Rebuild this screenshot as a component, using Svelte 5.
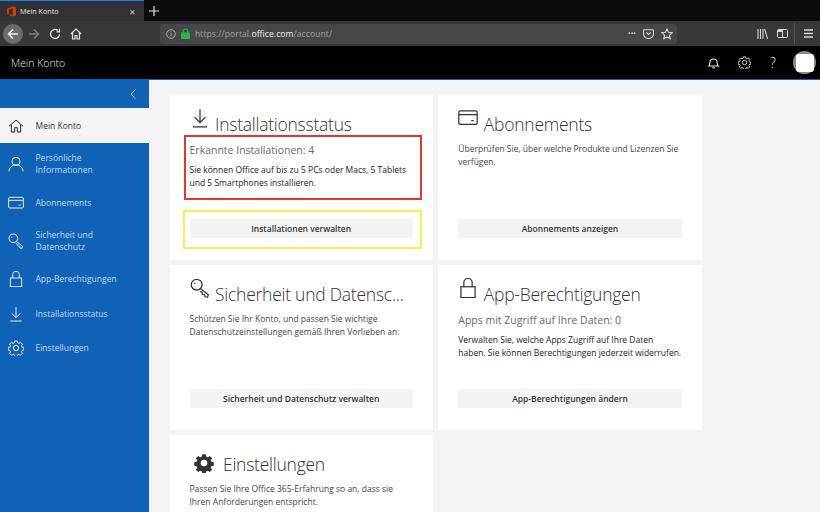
<script>
  const navItems = [
    { icon: 'home', label: 'Mein Konto', active: true },
    { icon: 'person', label: 'Persönliche Informationen', tall: true },
    { icon: 'card', label: 'Abonnements' },
    { icon: 'key', label: 'Sicherheit und Datenschutz', tall: true },
    { icon: 'lock', label: 'App-Berechtigungen' },
    { icon: 'download', label: 'Installationsstatus' },
    { icon: 'gear', label: 'Einstellungen' }
  ];

  const cards = [
    {
      icon: 'download',
      title: 'Installationsstatus',
      sub: 'Erkannte Installationen: 4',
      text: 'Sie können Office auf bis zu 5 PCs oder Macs, 5 Tablets\nund 5 Smartphones installieren.',
      action: 'Installationen verwalten',
      marked: true
    },
    {
      icon: 'card',
      title: 'Abonnements',
      text: 'Überprüfen Sie, über welche Produkte und Lizenzen Sie\nverfügen.',
      action: 'Abonnements anzeigen'
    },
    {
      icon: 'key',
      title: 'Sicherheit und Datensc...',
      text: 'Schützen Sie Ihr Konto, und passen Sie wichtige\nDatenschutzeinstellungen gemäß Ihren Vorlieben an.',
      action: 'Sicherheit und Datenschutz verwalten'
    },
    {
      icon: 'lock',
      title: 'App-Berechtigungen',
      sub: 'Apps mit Zugriff auf Ihre Daten: 0',
      text: 'Verwalten Sie, welche Apps Zugriff auf Ihre Daten\nhaben. Sie können Berechtigungen jederzeit widerrufen.',
      action: 'App-Berechtigungen ändern'
    },
    {
      icon: 'solidgear',
      title: 'Einstellungen',
      text: 'Passen Sie Ihre Office 365-Erfahrung so an, dass sie\nIhren Anforderungen entspricht.'
    }
  ];

  // gear outline, 8 teeth
  const gearPath =
    'M10 1.5h4l.6 2.8 1.9.8 2.4-1.6 2.8 2.8-1.6 2.4.8 1.9 2.8.6v4l-2.8.6-.8 1.9 1.6 2.4-2.8 2.8-2.4-1.6-1.9.8-.6 2.8h-4l-.6-2.8-1.9-.8-2.4 1.6-2.8-2.8 1.6-2.4-.8-1.9-2.8-.6v-4l2.8-.6.8-1.9-1.6-2.4 2.8-2.8 2.4 1.6 1.9-.8z';
</script>

{#snippet icon(name, size)}
  <svg class="icon" width={size} height={size} viewBox="0 0 24 24" fill="none" stroke="currentColor" stroke-width="1.5">
    {#if name === 'home'}
      <path d="M1.5 12.5 12 3l10.5 9.5M5 10v11h5v-6.5h4V21h5V10" />
    {:else if name === 'person'}
      <circle cx="12" cy="8" r="6" />
      <path d="M1.5 23c.5-6 4.5-9.5 10.5-9.5S22 17 22.5 23" />
    {:else if name === 'card'}
      <rect x="1" y="3.5" width="22" height="16" rx="1.5" />
      <path d="M1 8h22M16 15h3" />
    {:else if name === 'key'}
      <circle cx="8" cy="8" r="6.5" />
      <path d="M12.5 12.5 22 20l-1 3-3-.5-.5-2.5-2.5-.5-.5-2.5-2.5-1M5 6.5h1.5" />
    {:else if name === 'lock'}
      <rect x="3.5" y="10.5" width="17" height="13" />
      <path d="M7 10.5V5.500a5 5 0 0 1 10 0v5" />
    {:else if name === 'download'}
      <path d="M12 1.5V17M5.5 11l6.5 6.5 6.5-6.5M3.5 22.500h17" />
    {:else if name === 'gear'}
      <path d={gearPath} />
      <circle cx="12" cy="12" r="4" />
    {:else if name === 'solidgear'}
      <path fill="currentColor" stroke="none" fill-rule="evenodd" d="{gearPath}M12 8a4 4 0 1 0 0 8 4 4 0 0 0 0-8z" />
    {/if}
  </svg>
{/snippet}

<div class="page">
  <div class="tabstrip">
    <div class="tab">
      <svg class="favicon" width="9" height="11" viewBox="0 0 11 12">
        <path fill="#d83b01" d="M0 2.5 7 0l4 1.2v9.6L7 12l-7-2.5 7 .9V2.2L2.3 3.2v5.6L0 9.5z" />
      </svg>
      <span class="tab-title">Mein Konto</span>
      <span class="tab-close">✕</span>
    </div>
    <svg class="newtab" width="10" height="10" viewBox="0 0 10 10" stroke="#e4e4e4" stroke-width="1.2">
      <path d="M5 0v10M0 5h10" />
    </svg>
  </div>

  <div class="toolbar">
    <span class="back">
      <svg width="12" height="12" viewBox="0 0 12 12" fill="none" stroke="#f2f2f2" stroke-width="1.5">
        <path d="M11 6H1.5M6 1.5 1.5 6 6 10.5" />
      </svg>
    </span>
    <svg class="tool forward" width="12" height="12" viewBox="0 0 12 12" fill="none" stroke="#808082" stroke-width="1.3">
      <path d="M1 6h9.5M6 1.5 10.5 6 6 10.5" />
    </svg>
    <svg class="tool" width="12" height="12" viewBox="0 0 12 12" fill="none" stroke="#e8e8e8" stroke-width="1.3">
      <path d="M10.5 6.5A4.5 4.5 0 1 1 8.8 2.4M10.5 .8v3H7.5" />
    </svg>
    <svg class="tool" width="12" height="12" viewBox="0 0 12 12" fill="none" stroke="#e8e8e8" stroke-width="1.2">
      <path d="M.8 6 6 1l5.2 5M2.5 5v6H5V7.5h2V11h2.5V5" />
    </svg>
    <div class="urlbar">
      <svg width="10" height="10" viewBox="0 0 10 10" fill="none" stroke="#a8a8aa" stroke-width="1">
        <circle cx="5" cy="5" r="4.3" />
        <path d="M5 4.3v3M5 2.3v1" />
      </svg>
      <svg class="padlock" width="9" height="11" viewBox="0 0 9 11">
        <path d="M2.3 5V3.2a2.2 2.2 0 0 1 4.4 0V5" fill="none" stroke="#2fb344" stroke-width="1.2" />
        <rect y="4.5" width="9" height="6.5" rx="1" fill="#2fb344" />
      </svg>
      <span class="url">https://portal.<b>office.com</b>/account/</span>
      <span class="url-actions">
        <span class="dots">•••</span>
        <svg width="11" height="10" viewBox="0 0 11 10" fill="none" stroke="#d8d8d8" stroke-width="1.1">
          <path d="M1 .8h9a.5.5 0 0 1 .5.5v3.200a5 5 0 0 1-10 0V1.300A.5.5 0 0 1 1 .8zM3.300 3.500l2.200 2 2.200-2" />
        </svg>
        <svg width="12" height="12" viewBox="0 0 12 12" fill="none" stroke="#d8d8d8" stroke-width="1.1">
          <path d="m6 1 1.5 3.300 3.700.4-2.700 2.500.7 3.600L6 9l-3.200 1.800.7-3.600L.8 4.700l3.700-.4z" />
        </svg>
      </span>
    </div>
    <div class="tool-right">
      <svg width="11" height="10" viewBox="0 0 11 10" fill="none" stroke="#d8d8d8" stroke-width="1.1">
        <path d="M1 0v10M3.5 0v10M6 0v10M7.7 0l2.800 10" />
      </svg>
      <svg width="11" height="9" viewBox="0 0 11 9" fill="none" stroke="#d8d8d8" stroke-width="1">
        <rect x=".5" y=".5" width="10" height="8" rx="1" />
        <path d="M5.5 .5v8" />
        <path d="M1 1h4.500v2H1z" fill="#d8d8d8" stroke="none" />
      </svg>
      <span class="tool-sep"></span>
      <svg width="9" height="9" viewBox="0 0 9 9" stroke="#d8d8d8" stroke-width="1.3">
        <path d="M0 1h9M0 4.500h9M0 8h9" />
      </svg>
    </div>
  </div>

  <header class="appbar">
    <span class="app-title">Mein Konto</span>
    <div class="app-actions">
      <svg width="13" height="13" viewBox="0 0 12 12" fill="none" stroke="#eee" stroke-width="1">
        <path d="M1.5 9.300c1-.7 1.200-1.500 1.200-3.300a3.300 3.300 0 0 1 6.600 0c0 1.800.2 2.600 1.200 3.300zM5 10.500a1.200 1.200 0 0 0 2 0" />
      </svg>
      <svg width="13" height="13" viewBox="0 0 24 24" fill="none" stroke="#eee" stroke-width="1.6">
        <path d={gearPath} />
        <circle cx="12" cy="12" r="4" />
      </svg>
      <span class="help">?</span>
      <span class="avatar"><span></span></span>
    </div>
  </header>

  <div class="main">
    <nav class="sidebar">
      <div class="collapse">
        <svg width="6" height="10" viewBox="0 0 6 10" fill="none" stroke="#cfe0f2" stroke-width="0.9">
          <path d="M5.5 .5 1 5l4.500 4.500" />
        </svg>
      </div>
      {#each navItems as item}
        <div class="nav-item" class:active={item.active} class:tall={item.tall}>
          <span class="nav-icon">{@render icon(item.icon, 16)}</span>
          <span class="nav-label">{item.label}</span>
        </div>
      {/each}
    </nav>

    <main class="content">
      {#each cards as card}
        <section class="card">
          <div class="card-head">
            <span class="card-icon" class:wide={card.icon === 'solidgear'}>{@render icon(card.icon, 20)}</span>
            <h2>{card.title}</h2>
          </div>
          {#if card.sub}<p class="sub">{card.sub}</p>{/if}
          <p class="text" class:dark={card.sub}>{card.text}</p>
          {#if card.action}<button class="action">{card.action}</button>{/if}
          {#if card.marked}
            <span class="mark red"></span>
            <span class="mark yellow"></span>
          {/if}
        </section>
      {/each}
    </main>
  </div>
</div>

<style>
  :global(body) {
    margin: 0;
    background: #f4f4f4;
  }

  .page {
    width: 820px;
    height: 512px;
    overflow: hidden;
    display: flex;
    flex-direction: column;
    font-family: "Open Sans", "Noto Sans", sans-serif;
  }

  .tabstrip {
    height: 21px;
    flex-shrink: 0;
    background: #0c0c0f;
    display: flex;
    align-items: center;
  }

  .tab {
    width: 144px;
    height: 21px;
    box-sizing: border-box;
    background: #323234;
    border-top: 1px solid #0a84ff;
    display: flex;
    align-items: center;
    padding: 0 8px 0 7px;
    gap: 4px;
    color: #e6e6e6;
  }

  .tab-title {
    flex: 1;
    font-size: 7.2px;
  }

  .tab-close {
    font-size: 8px;
    color: #c4c4c4;
  }

  .newtab {
    margin-left: 5px;
  }

  .toolbar {
    height: 25px;
    flex-shrink: 0;
    background: #38383a;
    display: flex;
    align-items: center;
    padding-left: 3px;
  }

  .back {
    width: 20px;
    height: 20px;
    border-radius: 50%;
    background: #6c6c6e;
    display: flex;
    align-items: center;
    justify-content: center;
  }

  .tool {
    margin-left: 9px;
  }

  .forward {
    margin-left: 5px;
  }

  .urlbar {
    width: 517px;
    height: 20px;
    box-sizing: border-box;
    margin-left: 78px;
    background: #474749;
    border-radius: 3px;
    display: flex;
    align-items: center;
    gap: 5px;
    padding: 0 4px 0 6px;
  }

  .url {
    flex: 1;
    font-size: 8.5px;
    letter-spacing: 0.1px;
    color: #a2a2a4;
  }

  .url b {
    font-weight: 400;
    color: #f0f0f0;
  }

  .url-actions {
    display: flex;
    align-items: center;
    gap: 7px;
  }

  .dots {
    font-size: 7px;
    color: #d8d8d8;
  }

  .tool-right {
    margin-left: auto;
    padding-right: 7px;
    display: flex;
    align-items: center;
    gap: 9px;
  }

  .tool-sep {
    width: 1px;
    height: 21px;
    background: #555557;
    margin-left: -3px;
  }

  .appbar {
    height: 33px;
    flex-shrink: 0;
    background: #000;
    display: flex;
    align-items: center;
    padding: 0 4px 0 11px;
    border-bottom: 1px solid #0f62b5;
  }

  .app-title {
    color: #e8e8e8;
    font-size: 10.5px;
    font-weight: 300;
  }

  .app-actions {
    margin-left: auto;
    display: flex;
    align-items: center;
    gap: 18px;
  }

  .help {
    color: #e0e0e0;
    font-size: 14px;
    font-weight: 300;
    width: 8px;
    text-align: center;
  }

  .avatar {
    width: 23px;
    height: 23px;
    border-radius: 50%;
    background: #8a8a8a;
    display: flex;
    align-items: center;
    justify-content: center;
    margin-left: -2px;
  }

  .avatar span {
    width: 18px;
    height: 18px;
    border-radius: 3px;
    background: #fff;
  }

  .main {
    flex: 1;
    min-height: 0;
    display: flex;
  }

  .sidebar {
    width: 149px;
    flex-shrink: 0;
    background: #0f62b5;
    color: #c3d9f0;
  }

  .collapse {
    height: 28px;
    display: flex;
    align-items: center;
    justify-content: flex-end;
    padding-right: 13px;
    box-sizing: border-box;
  }

  .nav-item {
    height: 34.5px;
    box-sizing: border-box;
    padding-top: 2px;
    display: flex;
    align-items: center;
    font-size: 8.5px;
    line-height: 12px;
  }

  .nav-item.tall {
    height: 42px;
    padding-top: 1px;
  }

  .nav-item.active {
    background: #f4f4f4;
    color: #333;
  }

  .nav-icon {
    width: 35.5px;
    flex-shrink: 0;
    display: flex;
    justify-content: center;
    padding-right: 4px;
    box-sizing: border-box;
    color: #e4eef8;
  }

  .nav-item.active .nav-icon {
    color: #222;
  }

  .nav-label {
    width: 90px;
  }

  .icon {
    display: block;
  }

  .content {
    flex: 1;
    display: grid;
    grid-template-columns: 263.4px 263.4px;
    grid-auto-rows: 165px;
    gap: 5px 5.4px;
    padding: 15px 0 0 20.5px;
    align-content: start;
  }

  .card {
    position: relative;
    background: #fff;
    box-sizing: border-box;
    padding: 13px 20px 0;
    display: flex;
    flex-direction: column;
    min-width: 0;
  }

  .card-head {
    display: flex;
    align-items: center;
    height: 29px;
    gap: 5.5px;
    color: #333;
  }

  .card-icon {
    flex-shrink: 0;
    margin-top: -9px;
  }

  .card-icon.wide {
    margin: 0 4px 0 4px;
  }

  h2 {
    margin: 3px 0 0;
    font-size: 17.5px;
    letter-spacing: -0.25px;
    font-weight: 300;
    color: #333;
    white-space: nowrap;
  }

  .sub {
    margin: 6px 0 0;
    font-size: 10.5px;
    line-height: 14px;
    color: #6a6a6a;
  }

  .text {
    margin: 5px 0 0;
    font-size: 8.5px;
    line-height: 13px;
    color: #444;
    white-space: pre-line;
  }

  .text.dark {
    margin-top: 6px;
    color: #222;
  }

  .action {
    position: absolute;
    left: 20px;
    right: 20px;
    bottom: 22px;
    height: 19px;
    border: 0;
    padding: 0;
    background: #f3f3f3;
    font: 600 8.5px "Open Sans", "Noto Sans", sans-serif;
    color: #333;
  }

  .mark {
    position: absolute;
    box-sizing: border-box;
    pointer-events: none;
  }

  .mark.red {
    left: 14.5px;
    top: 40px;
    width: 238px;
    height: 65px;
    border: 2px solid #d93a32;
  }

  .mark.yellow {
    left: 13.5px;
    top: 115px;
    width: 239px;
    height: 39px;
    border: 2px solid #f6f050;
  }
</style>
